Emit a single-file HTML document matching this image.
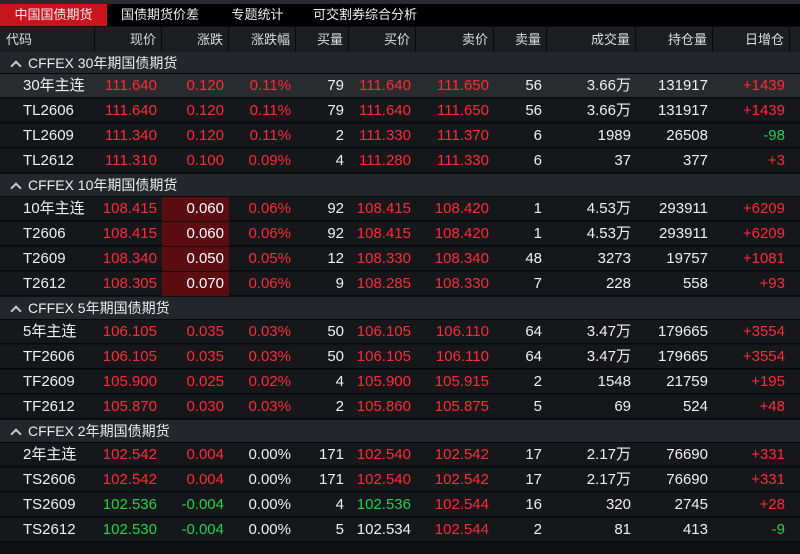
<!DOCTYPE html>
<html><head><meta charset="utf-8"><style>
*{margin:0;padding:0;box-sizing:border-box}
body{width:800px;height:554px;background:#0f1013;font-family:"Liberation Sans","Noto Sans CJK SC",sans-serif;color:#e8e8e8;overflow:hidden;position:relative}
.top{position:absolute;left:0;top:0;width:800px;height:4px;background:#2a2b30}
.tabs{position:absolute;left:0;top:4px;width:800px;height:22px;background:#000;font-size:13px}
.tab{position:absolute;top:0;height:22px;line-height:22px;text-align:center;color:#eee}
.tab.on{background:#c8141c}
.hdr{position:absolute;top:27px;left:0;width:800px;height:25px;background:#1d1e22;font-size:13px;color:#ddd}
.hc{position:absolute;top:0;height:25px;line-height:25px;text-align:right;padding-right:5px;border-right:1px solid #0a0a0c}
.row{position:absolute;left:0;width:800px;height:24px;background:#16171b;border-bottom:1px solid #08080a;font-size:15px}
.row.sel{background:#2a2b2f}
.grp{position:absolute;left:0;width:800px;height:22px;background:#25262b;font-size:14px;line-height:22px;padding-left:10px;color:#eee;border-bottom:1px solid #08080a}
.c{position:absolute;top:0;height:24px;line-height:24px;text-align:right;padding-right:5px;white-space:nowrap}
.c0{text-align:left;padding-left:23px}
.r{color:#ff2b38}.g{color:#22d24b}.w{color:#f0f0f0}
.hl{background:#5c0d12;color:#fff}
.chev{display:inline-block;width:8px;height:8px;border-left:2px solid #ccc;border-top:2px solid #ccc;transform:rotate(45deg);margin:0 8px 0 2px;position:relative;top:2px}
</style></head><body>
<div class="top"></div>
<div class="tabs">
<div class="tab on" style="left:0;width:107px">中国国债期货</div>
<div class="tab" style="left:110px;width:100px">国债期货价差</div>
<div class="tab" style="left:220px;width:75px">专题统计</div>
<div class="tab" style="left:305px;width:120px">可交割券综合分析</div>
</div>
<div class="hdr">
<div class="hc" style="left:0;width:95px;text-align:left;padding-left:6px">代码</div>
<div class="hc" style="left:95px;width:67px">现价</div>
<div class="hc" style="left:162px;width:67px">涨跌</div>
<div class="hc" style="left:229px;width:67px">涨跌幅</div>
<div class="hc" style="left:296px;width:53px">买量</div>
<div class="hc" style="left:349px;width:67px">买价</div>
<div class="hc" style="left:416px;width:78px">卖价</div>
<div class="hc" style="left:494px;width:53px">卖量</div>
<div class="hc" style="left:547px;width:89px">成交量</div>
<div class="hc" style="left:636px;width:77px">持仓量</div>
<div class="hc" style="left:713px;width:77px">日增仓</div>
</div>
<div id="b"></div>
<script>
var L=[0,95,162,229,296,349,416,494,547,636,713,790];
var G=[
["CFFEX 30年期国债期货",52,[
["30年主连","r111.640","r0.120","r0.11%","w79","r111.640","r111.650","w56","w3.66万","w131917","r+1439",1],
["TL2606","r111.640","r0.120","r0.11%","w79","r111.640","r111.650","w56","w3.66万","w131917","r+1439"],
["TL2609","r111.340","r0.120","r0.11%","w2","r111.330","r111.370","w6","w1989","w26508","g-98"],
["TL2612","r111.310","r0.100","r0.09%","w4","r111.280","r111.330","w6","w37","w377","r+3"]]],
["CFFEX 10年期国债期货",174,[
["10年主连","r108.415","h0.060","r0.06%","w92","r108.415","r108.420","w1","w4.53万","w293911","r+6209"],
["T2606","r108.415","h0.060","r0.06%","w92","r108.415","r108.420","w1","w4.53万","w293911","r+6209"],
["T2609","r108.340","h0.050","r0.05%","w12","r108.330","r108.340","w48","w3273","w19757","r+1081"],
["T2612","r108.305","h0.070","r0.06%","w9","r108.285","r108.330","w7","w228","w558","r+93"]]],
["CFFEX 5年期国债期货",297,[
["5年主连","r106.105","r0.035","r0.03%","w50","r106.105","r106.110","w64","w3.47万","w179665","r+3554"],
["TF2606","r106.105","r0.035","r0.03%","w50","r106.105","r106.110","w64","w3.47万","w179665","r+3554"],
["TF2609","r105.900","r0.025","r0.02%","w4","r105.900","r105.915","w2","w1548","w21759","r+195"],
["TF2612","r105.870","r0.030","r0.03%","w2","r105.860","r105.875","w5","w69","w524","r+48"]]],
["CFFEX 2年期国债期货",420,[
["2年主连","r102.542","r0.004","w0.00%","w171","r102.540","r102.542","w17","w2.17万","w76690","r+331"],
["TS2606","r102.542","r0.004","w0.00%","w171","r102.540","r102.542","w17","w2.17万","w76690","r+331"],
["TS2609","g102.536","g-0.004","w0.00%","w4","g102.536","r102.544","w16","w320","w2745","r+28"],
["TS2612","g102.530","g-0.004","w0.00%","w5","w102.534","r102.544","w2","w81","w413","g-9"]]]];
var h="";
G.forEach(function(g){
 h+='<div class="grp" style="top:'+g[1]+'px;height:'+(g[1]==52?22:23)+'px"><span class="chev"></span>'+g[0]+'</div>';
 var y=g[1]+(g[1]==52?22:23);
 g[2].forEach(function(r){
  h+='<div class="row'+(r[11]?' sel':'')+'" style="top:'+y+'px"><div class="c c0 w" style="left:0;width:95px">'+r[0]+'</div>';
  for(var i=1;i<11;i++){var t=r[i],k=t[0],v=t.slice(1);var cl=k=='h'?'hl':k;
   h+='<div class="c '+cl+'" style="left:'+L[i]+'px;width:'+(L[i+1]-L[i])+'px">'+v+'</div>';}
  h+='</div>';y+=25;});
});
document.getElementById('b').innerHTML=h;
</script>
</body></html>
